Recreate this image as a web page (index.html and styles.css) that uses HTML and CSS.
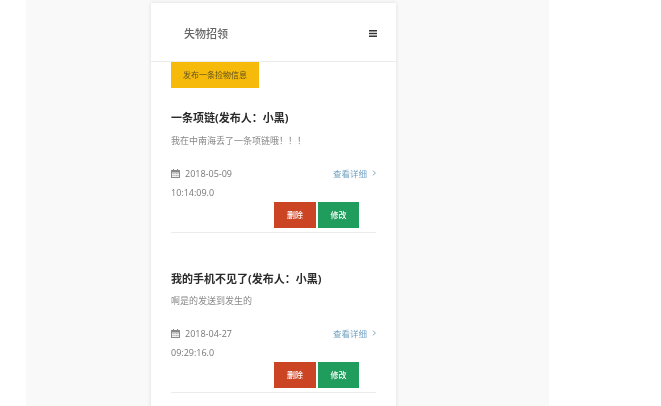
FILE: index.html
```html
<!DOCTYPE html>
<html lang="zh">
<head>
<meta charset="utf-8">
<title>失物招领</title>
<link rel="stylesheet" href="styles.css">
</head>
<body>
<div class="stage">
  <main class="card">
    <header class="top">
      <span class="brand">失物招领</span>
      <svg class="menu" width="8" height="7" viewBox="0 0 8 7"><path d="M0 0h8v1.500H0zM0 2.750h8v1.500H0zM0 5.500h8V7H0z" fill="#333"/></svg>
    </header>
    <div class="content">
      <a class="publish">发布一条捡物信息</a>
      <article class="item">
        <h2>一条项链(发布人：小黑)</h2>
        <p class="desc">我在中南海丢了一条项链哦！！！</p>
        <div class="meta">
          <span class="date">
            <svg class="cal" width="9" height="9" viewBox="0 0 9 9"><path fill="#888" d="M2 0h1v1h3V0h1v1h1.500a.5.5 0 0 1 .5.5V8.500a.5.5 0 0 1-.5.5H.5a.5.5 0 0 1-.5-.5V1.500A.5.5 0 0 1 .5 1H2zM1 3.500V8h7V3.500z"/><path fill="#aaa" d="M1.500 4h1.200v1.200H1.500zM3.300 4h1.200v1.200H3.300zM5.100 4h1.200v1.200H5.100zM6.700 4h.9v1.200h-.9zM1.500 6h1.200v1.200H1.500zM3.300 6h1.200v1.200H3.300zM5.100 6h1.200v1.200H5.100zM6.700 6h.9v1.200h-.9z"/></svg>
            2018-05-09
          </span>
          <a class="more">查看详细<svg class="chev" width="4" height="6" viewBox="0 0 4 6"><path d="M1 .6l2.400 2.400-2.400 2.400" fill="none" stroke="#7da8c6"/></svg></a>
        </div>
        <div class="time">10:14:09.0</div>
        <div class="actions"><a class="btn del">删除</a><a class="btn edit">修改</a></div>
      </article>
      <article class="item">
        <h2>我的手机不见了(发布人：小黑)</h2>
        <p class="desc">啊是的发送到发生的</p>
        <div class="meta">
          <span class="date">
            <svg class="cal" width="9" height="9" viewBox="0 0 9 9"><path fill="#888" d="M2 0h1v1h3V0h1v1h1.500a.5.5 0 0 1 .5.5V8.500a.5.5 0 0 1-.5.5H.5a.5.5 0 0 1-.5-.5V1.500A.5.5 0 0 1 .5 1H2zM1 3.500V8h7V3.500z"/><path fill="#aaa" d="M1.500 4h1.200v1.200H1.500zM3.300 4h1.200v1.200H3.300zM5.100 4h1.200v1.200H5.100zM6.700 4h.9v1.200h-.9zM1.500 6h1.200v1.200H1.500zM3.300 6h1.200v1.200H3.300zM5.100 6h1.200v1.200H5.100zM6.700 6h.9v1.200h-.9z"/></svg>
            2018-04-27
          </span>
          <a class="more">查看详细<svg class="chev" width="4" height="6" viewBox="0 0 4 6"><path d="M1 .6l2.400 2.400-2.400 2.400" fill="none" stroke="#7da8c6"/></svg></a>
        </div>
        <div class="time">09:29:16.0</div>
        <div class="actions"><a class="btn del">删除</a><a class="btn edit">修改</a></div>
      </article>
    </div>
  </main>
</div>
</body>
</html>
```

FILE: styles.css
```css
html, body {
  margin: 0;
  height: 100%;
  background: #fff;
  overflow: hidden;
}
body {
  font-family: "Open Sans", "Noto Sans CJK SC", sans-serif;
  color: #666;
}
.stage {
  width: 523px;
  height: 406px;
  margin-left: 26px;
  padding: 3px 0 0 125px;
  box-sizing: border-box;
  background: #f9f9f9;
  overflow: hidden;
}
.card {
  width: 245px;
  min-height: 500px;
  background: #fff;
  box-shadow: 0 0 4px rgba(0, 0, 0, .12);
}
.top {
  display: flex;
  align-items: center;
  justify-content: space-between;
  height: 59px;
  box-sizing: border-box;
  padding: 3px 19px 1px 33px;
  border-bottom: 1px solid #ececec;
  filter: blur(.3px);
}
.brand {
  font-size: 11px;
  font-weight: 500;
  color: #666;
}
.menu { display: block; }
.content {
  padding: 0 20px;
  filter: blur(.3px);
}
.publish {
  display: block;
  width: 88px;
  height: 26px;
  line-height: 26px;
  text-align: center;
  font-size: 8px;
  color: #5e5020;
  background: #f6bb0a;
}
.item {
  height: 160px;
  box-sizing: border-box;
  padding-top: 22px;
}
.item h2 {
  margin: 0;
  font-size: 11px;
  line-height: 16px;
  font-weight: 700;
  color: #2b2b2b;
}
.item + .item h2 {
  margin: 1px 0 -1px;
}
.desc {
  margin: 8px 0 0;
  font-size: 9px;
  line-height: 14px;
  color: #888;
}
.meta {
  display: flex;
  justify-content: space-between;
  align-items: center;
  margin-top: 18px;
  height: 14px;
  font-size: 9px;
  color: #777;
}
.date { display: flex; align-items: center; gap: 5px; }
.cal { display: block; }
.more {
  display: flex;
  align-items: center;
  gap: 5px;
  color: #6f9fc0;
  font-size: 8.500px;
}
.time {
  margin-top: 6px;
  font-size: 9px;
  line-height: 14px;
  color: #777;
}
.actions {
  display: flex;
  justify-content: flex-end;
  gap: 2px;
  margin-top: 2px;
  padding: 0 17px 4px 0;
  border-bottom: 1px solid #ececec;
}
.btn {
  width: 42px;
  height: 26px;
  line-height: 26px;
  text-align: center;
  font-size: 8px;
  font-weight: 500;
  color: #fff;
}
.del { background: #cb4525; }
.edit { background: #209c5c; width: 41px; }
```
